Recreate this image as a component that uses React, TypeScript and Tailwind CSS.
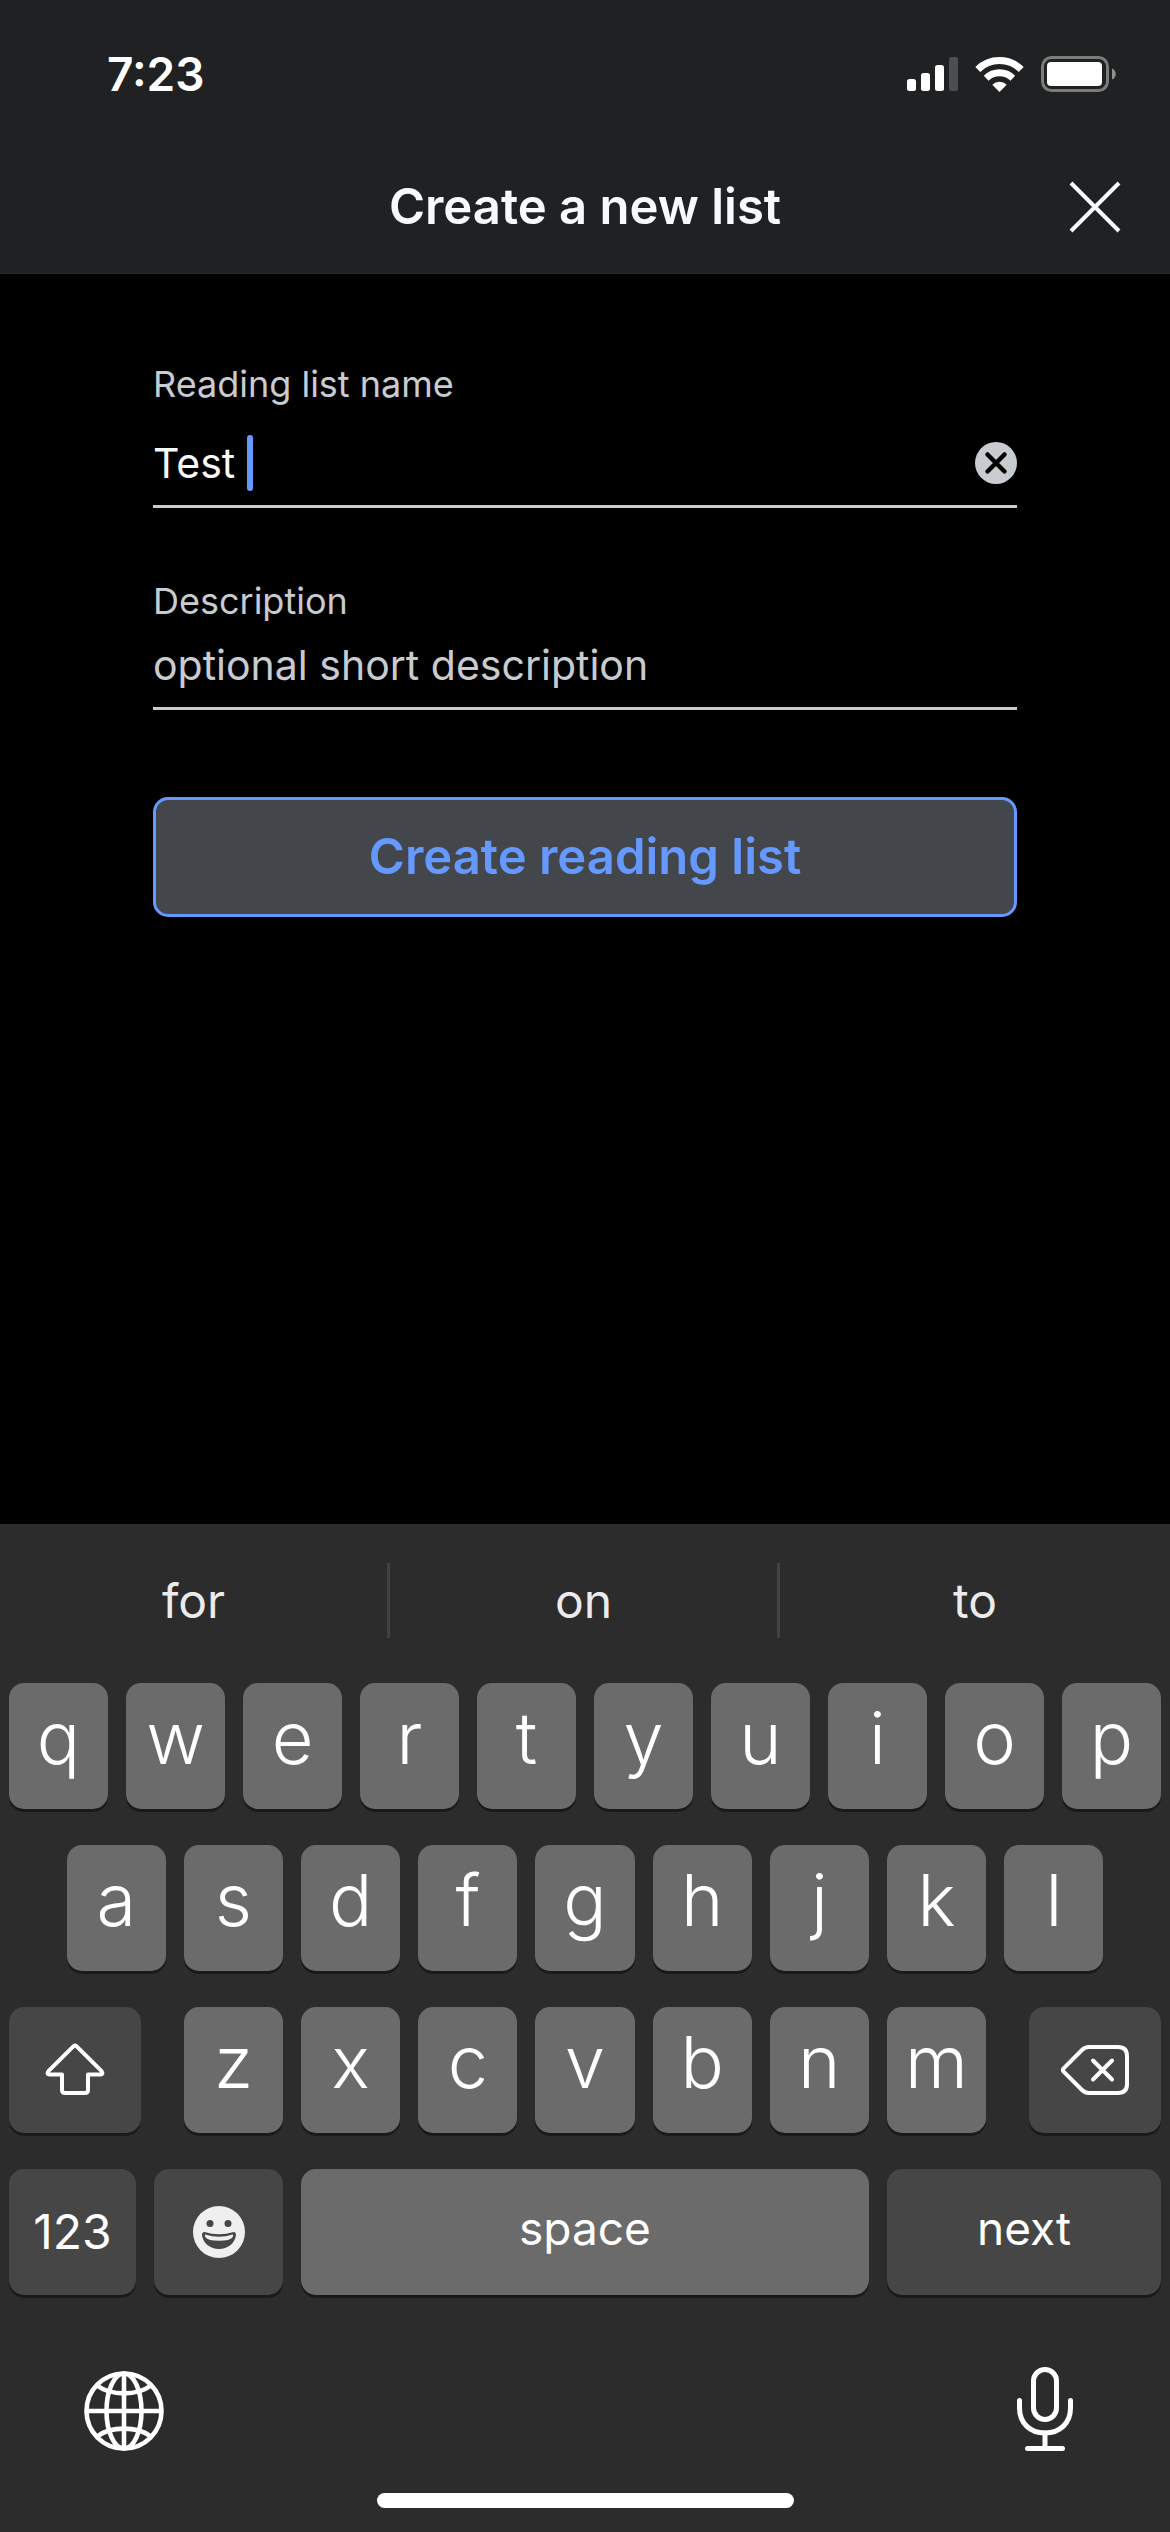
import { useState, type ReactNode } from "react";

function SignalIcon() {
  return (
    <svg width="51" height="36" viewBox="0 0 51 36" aria-hidden="true">
      <rect x="0" y="23" width="9" height="12" rx="2.5" fill="#fff" />
      <rect x="14" y="17" width="9" height="18" rx="2.5" fill="#fff" />
      <rect x="28" y="9" width="9" height="26" rx="2.5" fill="#fff" />
      <rect x="42" y="1" width="9" height="34" rx="2.5" fill="#4d4e4f" />
    </svg>
  );
}

function WifiIcon() {
  return (
    <svg width="49" height="36" viewBox="0 0 49 36" fill="none" aria-hidden="true">
      <path d="M2.8 13.4 A31 31 0 0 1 46.2 13.4" stroke="#fff" strokeWidth="7" />
      <path d="M11.2 22.2 A19 19 0 0 1 37.8 22.2" stroke="#fff" strokeWidth="6.8" />
      <path d="M24.5 36 L17.3 28.7 A10.4 10.4 0 0 1 31.7 28.7 Z" fill="#fff" />
    </svg>
  );
}

function BatteryIcon() {
  return (
    <svg width="75" height="36" viewBox="0 0 75 36" aria-hidden="true">
      <rect x="1.5" y="1.5" width="65" height="33" rx="9" fill="none" stroke="#7b7c7c" strokeWidth="3" />
      <rect x="6" y="6" width="55" height="24" rx="4" fill="#fff" />
      <path d="M71 12.5 C76 14 76 22 71 23.5 Z" fill="#8e8f8f" />
    </svg>
  );
}

function CloseIcon() {
  return (
    <svg width="52" height="52" viewBox="0 0 52 52" stroke="#f8f9fa" strokeWidth="4" aria-hidden="true">
      <path d="M2 2 L50 50 M50 2 L2 50" />
    </svg>
  );
}

function ClearIcon() {
  return (
    <svg width="42" height="42" viewBox="0 0 42 42" aria-hidden="true">
      <circle cx="21" cy="21" r="21" fill="#c8ccd1" />
      <path d="M12.5 12.5 L29.5 29.5 M29.5 12.5 L12.5 29.5" stroke="#000" strokeWidth="4.5" strokeLinecap="round" />
    </svg>
  );
}

function ShiftIcon() {
  return (
    <svg width="60" height="54" viewBox="0 0 60 54" fill="none" stroke="#fff" strokeWidth="4" strokeLinejoin="round" aria-hidden="true">
      <path d="M28.6 3.2 Q30 2 31.4 3.2 L56.6 28.2 Q58.6 31.5 55.5 31.5 H43 V47 Q43 50 40 50 H20 Q17 50 17 47 V31.5 H4.5 Q1.4 31.5 3.4 28.2 Z" />
    </svg>
  );
}

function DeleteIcon() {
  return (
    <svg width="68" height="50" viewBox="0 0 68 50" fill="none" stroke="#fff" strokeWidth="4" strokeLinecap="round" strokeLinejoin="round" aria-hidden="true">
      <path d="M2.6 23.4 L21 5 Q24 2 28 2 H57 Q66 2 66 11 V39 Q66 48 57 48 H28 Q24 48 21 45 L2.6 26.6 Q1.2 25 2.6 23.4 Z" />
      <path d="M32 15.5 L51 34.5 M51 15.5 L32 34.5" />
    </svg>
  );
}

function EmojiIcon() {
  return (
    <svg width="52" height="52" viewBox="0 0 52 52" aria-hidden="true">
      <circle cx="26" cy="26" r="26" fill="#efefef" />
      <circle cx="17" cy="17.5" r="3.5" fill="#464646" />
      <circle cx="35" cy="17.5" r="3.5" fill="#464646" />
      <path d="M11.5 26 Q26 30.5 40.5 26 Q43 26 43 29 C42 37.5 34.5 43 26 43 C17.5 43 10 37.5 9 29 Q9 26 11.5 26 Z" fill="#464646" />
      <path d="M12.3 28.6 Q26 33 39.7 28.6 Q40.8 28.8 39.6 31.2 Q37 34.8 26 34.8 Q15 34.8 12.4 31.2 Q11.2 28.8 12.3 28.6 Z" fill="#efefef" />
    </svg>
  );
}

function GlobeIcon() {
  return (
    <svg width="80" height="80" viewBox="0 0 80 80" fill="none" stroke="#fff" strokeWidth="4.6" aria-hidden="true">
      <circle cx="40" cy="40" r="37.5" />
      <ellipse cx="40" cy="40" rx="17.5" ry="37.5" />
      <path d="M40 2 V78 M2 40 H78" />
      <path d="M13 14.5 C27 25 53 25 67 14.5 M13 65.5 C27 55 53 55 67 65.5" />
    </svg>
  );
}

function MicIcon() {
  return (
    <svg width="56" height="84" viewBox="0 0 56 84" fill="none" stroke="#fff" strokeWidth="5" strokeLinecap="round" aria-hidden="true">
      <rect x="16.5" y="2.5" width="23" height="50" rx="11.5" />
      <path d="M2.5 33.5 V41 C2.5 56 13 66 28 66 C43 66 53.5 56 53.5 41 V33.5" />
      <path d="M28 66 V81 M10.5 81.5 H45.5" />
    </svg>
  );
}

function LetterKey({ letter }: { letter: string }) {
  return (
    <button
      type="button"
      className="flex h-[126px] min-w-0 flex-1 items-center justify-center rounded-[15px] bg-[#6b6b6b] pb-4 text-[72px] leading-[90px] font-light text-white shadow-[0_3px_0_#1a1a1a]"
    >
      {letter}
    </button>
  );
}

function ActionKey({ label, className, children }: { label: string; className: string; children: ReactNode }) {
  return (
    <button
      type="button"
      aria-label={label}
      className={`flex h-[126px] items-center justify-center rounded-[15px] leading-[60px] text-white shadow-[0_3px_0_#1a1a1a] ${className}`}
    >
      {children}
    </button>
  );
}

function Keyboard() {
  return (
    <section aria-label="Keyboard" className="bg-[#2c2c2c] pb-6">
      <div className="grid grid-cols-3 pt-[39px]">
        {["for", "on", "to"].map((word, i) => (
          <button
            key={word}
            type="button"
            className={`h-[75px] text-[48px] leading-[75px] text-[#ebebeb] ${i < 2 ? "border-r-3 border-[#424242]" : ""}`}
          >
            {word}
          </button>
        ))}
      </div>

      <div className="mt-[45px] flex flex-col gap-9 px-[9px]">
        <div className="flex gap-[18px]">
          {"qwertyuiop".split("").map((l) => (
            <LetterKey key={l} letter={l} />
          ))}
        </div>
        <div className="flex gap-[18px] px-[5%]">
          {"asdfghjkl".split("").map((l) => (
            <LetterKey key={l} letter={l} />
          ))}
        </div>
        <div className="flex gap-[43px]">
          <ActionKey label="shift" className="w-[132px] bg-[#464646]">
            <ShiftIcon />
          </ActionKey>
          <div className="flex flex-1 gap-[18px]">
            {"zxcvbnm".split("").map((l) => (
              <LetterKey key={l} letter={l} />
            ))}
          </div>
          <ActionKey label="delete" className="w-[132px] bg-[#464646]">
            <DeleteIcon />
          </ActionKey>
        </div>
        <div className="flex gap-[18px]">
          <ActionKey label="123" className="w-[127px] bg-[#464646] text-[48px]">
            123
          </ActionKey>
          <ActionKey label="emoji" className="w-[129px] bg-[#464646]">
            <EmojiIcon />
          </ActionKey>
          <ActionKey label="space" className="flex-1 bg-[#6b6b6b] pb-2 text-[46px]">
            space
          </ActionKey>
          <ActionKey label="next" className="w-[274px] bg-[#464646] pb-2 text-[46px]">
            next
          </ActionKey>
        </div>
      </div>

      <div className="mt-[72px] flex items-end justify-between pr-[97px] pl-[84px]">
        <button type="button" aria-label="Next keyboard">
          <GlobeIcon />
        </button>
        <button type="button" aria-label="Dictate">
          <MicIcon />
        </button>
      </div>
      <div className="mx-auto mt-[42px] h-[15px] w-[417px] rounded-full bg-white" />
    </section>
  );
}

export default function App() {
  const [name, setName] = useState("Test ");
  const [description, setDescription] = useState("");

  return (
    <div className="flex min-h-screen flex-col bg-black font-[Inter,sans-serif]">
      <header className="border-b border-[#27292d] bg-[#202122]">
        <div className="flex h-[148px] items-center justify-between pr-[54px] pl-[107px]">
          <time className="text-[46px] leading-[56px] font-semibold text-white">7:23</time>
          <div className="flex items-center gap-[17px]">
            <SignalIcon />
            <WifiIcon />
            <BatteryIcon />
          </div>
        </div>
        <div className="grid h-[125px] grid-cols-[1fr_auto_1fr] items-center px-[49px] pb-[8px]">
          <h1 className="col-start-2 text-[49px] leading-[60px] font-semibold text-[#f8f9fa]">Create a new list</h1>
          <button type="button" aria-label="Close" className="justify-self-end">
            <CloseIcon />
          </button>
        </div>
      </header>

      <main className="flex-1 px-[153px] pt-[88px]">
        <form onSubmit={(e) => e.preventDefault()}>
          <label htmlFor="list-name" className="block text-[36px] leading-[44px] text-[#c8ccd1]">
            Reading list name
          </label>
          <div className="mt-[29px] flex h-[73px] items-start border-b-3 border-[#c8ccd1]">
            <input
              id="list-name"
              type="text"
              value={name}
              onChange={(e) => setName(e.target.value)}
              className="field-sizing-content h-[56px] text-[41px] leading-[56px] text-[#f8f9fa] caret-transparent outline-none"
            />
            <span aria-hidden="true" className="h-[56px] w-[6px] rounded-full bg-[#6699ff]" />
            <button type="button" aria-label="Clear text" onClick={() => setName("")} className="mt-[7px] ml-auto">
              <ClearIcon />
            </button>
          </div>

          <label htmlFor="list-description" className="mt-[71px] block text-[36px] leading-[44px] text-[#c8ccd1]">
            Description
          </label>
          <input
            id="list-description"
            type="text"
            value={description}
            onChange={(e) => setDescription(e.target.value)}
            placeholder="optional short description"
            className="mt-[8px] block h-[79px] w-full border-b-3 border-[#c8ccd1] pb-[8px] text-[41px] leading-[56px] text-[#f8f9fa] outline-none placeholder:text-[#c8ccd1]"
          />

          <button
            type="submit"
            className="mt-[87px] h-[120px] w-full rounded-[15px] border-3 border-[#6699ff] bg-[#43464a] text-[49px] leading-[60px] font-semibold text-[#6699ff]"
          >
            Create reading list
          </button>
        </form>
      </main>

      <Keyboard />
    </div>
  );
}
